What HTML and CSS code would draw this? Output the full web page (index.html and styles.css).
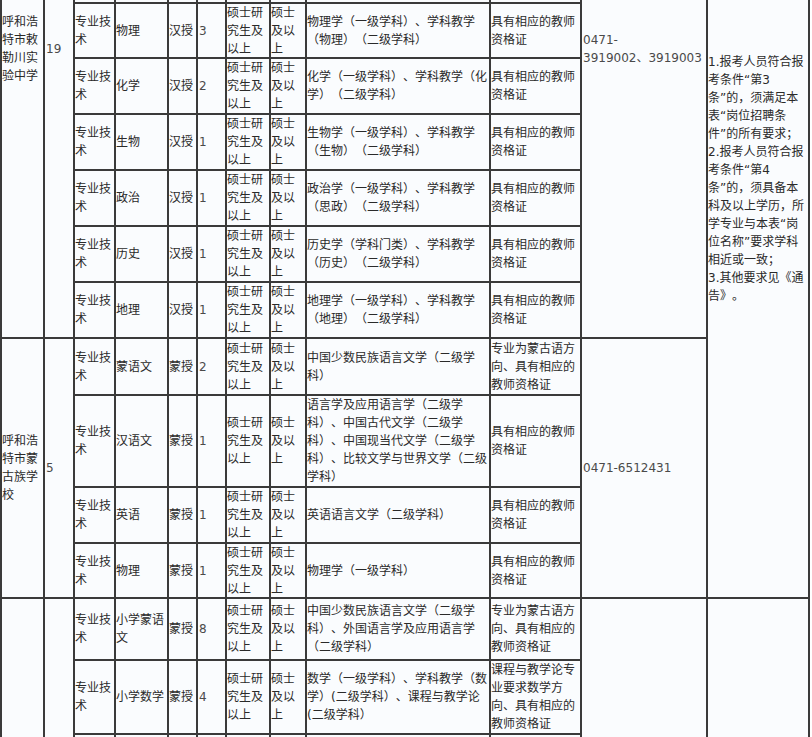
FILE: index.html
```html
<!DOCTYPE html>
<html lang="zh-CN">
<head>
<meta charset="utf-8">
<title>岗位表</title>
<link rel="stylesheet" href="styles.css">
</head>
<body>
<div class="sheet">
  <!-- continuation of the group that starts above the visible area -->
  <div class="c span7">呼和浩特市敕勒川实验中学</div>
  <div class="c span7 num">19</div>
  <div class="c"></div><div class="c"></div><div class="c"></div><div class="c"></div>
  <div class="c"></div><div class="c"></div><div class="c"></div><div class="c"></div>
  <div class="c span7 num nowrap">0471-<br>3919002、3919003</div>
  <div class="c span11 nowrap">1.报考人员符合报<br>考条件“第3<br>条”的，须满足本<br>表“岗位招聘条<br>件”的所有要求；<br>2.报考人员符合报<br>考条件“第4<br>条”的，须具备本<br>科及以上学历，所<br>学专业与本表“岗<br>位名称”要求学科<br>相近或一致；<br>3.其他要求见《通<br>告》。</div>

  <div class="c">专业技术</div><div class="c">物理</div><div class="c">汉授</div><div class="c num">3</div>
  <div class="c">硕士研究生及以上</div><div class="c">硕士及以上</div>
  <div class="c">物理学（一级学科）、学科教学（物理）（二级学科）</div><div class="c">具有相应的教师资格证</div>

  <div class="c">专业技术</div><div class="c">化学</div><div class="c">汉授</div><div class="c num">2</div>
  <div class="c">硕士研究生及以上</div><div class="c">硕士及以上</div>
  <div class="c">化学（一级学科）、学科教学（化学）（二级学科）</div><div class="c">具有相应的教师资格证</div>

  <div class="c">专业技术</div><div class="c">生物</div><div class="c">汉授</div><div class="c num">1</div>
  <div class="c">硕士研究生及以上</div><div class="c">硕士及以上</div>
  <div class="c">生物学（一级学科）、学科教学（生物）（二级学科）</div><div class="c">具有相应的教师资格证</div>

  <div class="c">专业技术</div><div class="c">政治</div><div class="c">汉授</div><div class="c num">1</div>
  <div class="c">硕士研究生及以上</div><div class="c">硕士及以上</div>
  <div class="c">政治学（一级学科）、学科教学（思政）（二级学科）</div><div class="c">具有相应的教师资格证</div>

  <div class="c">专业技术</div><div class="c">历史</div><div class="c">汉授</div><div class="c num">1</div>
  <div class="c">硕士研究生及以上</div><div class="c">硕士及以上</div>
  <div class="c">历史学（学科门类）、学科教学（历史）（二级学科）</div><div class="c">具有相应的教师资格证</div>

  <div class="c">专业技术</div><div class="c">地理</div><div class="c">汉授</div><div class="c num">1</div>
  <div class="c">硕士研究生及以上</div><div class="c">硕士及以上</div>
  <div class="c">地理学（一级学科）、学科教学（地理）（二级学科）</div><div class="c">具有相应的教师资格证</div>

  <!-- 呼和浩特市蒙古族学校 -->
  <div class="c span4">呼和浩特市蒙古族学校</div>
  <div class="c span4 num">5</div>
  <div class="c">专业技术</div><div class="c">蒙语文</div><div class="c">蒙授</div><div class="c num">2</div>
  <div class="c">硕士研究生及以上</div><div class="c">硕士及以上</div>
  <div class="c">中国少数民族语言文学（二级学科）</div><div class="c">专业为蒙古语方向、具有相应的教师资格证</div>
  <div class="c span4 num">0471-6512431</div>

  <div class="c">专业技术</div><div class="c">汉语文</div><div class="c">蒙授</div><div class="c num">1</div>
  <div class="c">硕士研究生及以上</div><div class="c">硕士及以上</div>
  <div class="c">语言学及应用语言学（二级学科）、中国古代文学（二级学科）、中国现当代文学（二级学科）、比较文学与世界文学（二级学科）</div><div class="c">具有相应的教师资格证</div>

  <div class="c">专业技术</div><div class="c">英语</div><div class="c">蒙授</div><div class="c num">1</div>
  <div class="c">硕士研究生及以上</div><div class="c">硕士及以上</div>
  <div class="c">英语语言文学（二级学科）</div><div class="c">具有相应的教师资格证</div>

  <div class="c">专业技术</div><div class="c">物理</div><div class="c">蒙授</div><div class="c num">1</div>
  <div class="c">硕士研究生及以上</div><div class="c">硕士及以上</div>
  <div class="c">物理学（一级学科）</div><div class="c">具有相应的教师资格证</div>

  <!-- next group, continues below the visible area -->
  <div class="c span3"></div>
  <div class="c span3"></div>
  <div class="c">专业技术</div><div class="c">小学蒙语文</div><div class="c">蒙授</div><div class="c num">8</div>
  <div class="c">硕士研究生及以上</div><div class="c">硕士及以上</div>
  <div class="c">中国少数民族语言文学（二级学科）、外国语言学及应用语言学（二级学科）</div><div class="c">专业为蒙古语方向、具有相应的教师资格证</div>
  <div class="c span3"></div>
  <div class="c span3"></div>

  <div class="c">专业技术</div><div class="c">小学数学</div><div class="c">蒙授</div><div class="c num">4</div>
  <div class="c">硕士研究生及以上</div><div class="c">硕士及以上</div>
  <div class="c">数学（一级学科）、学科教学（数学）(二级学科）、课程与教学论(二级学科）</div><div class="c">课程与教学论专业要求数学方向、具有相应的教师资格证</div>

  <div class="c"></div><div class="c"></div><div class="c"></div><div class="c"></div>
  <div class="c"></div><div class="c"></div><div class="c"></div><div class="c"></div>
</div>
</body>
</html>
```

FILE: styles.css
```css
html, body {
  margin: 0;
  padding: 0;
  background: #ffffff;
  overflow: hidden;
}

.sheet {
  display: grid;
  grid-template-columns: 43px 30px 41px 53px 29px 29px 44px 36px 184px 91px 126px 102px;
  grid-template-rows: 243px 55px 56px 56px 56px 56px 56px 57px 92px 56px 55px 62px 74px 60px;
  width: max-content;
  margin-top: -241px;
  border-left: 2px solid #3a3a3a;
  border-top: 2px solid #3a3a3a;
  font-family: "DejaVu Sans", "Noto Sans CJK SC", sans-serif;
  font-size: 12px;
  line-height: 18px;
  color: #2a2a2a;
  text-spacing-trim: space-all;
}

.c {
  box-sizing: border-box;
  display: flex;
  align-items: center;
  padding: 0;
  border-right: 2px solid #3a3a3a;
  border-bottom: 2px solid #3a3a3a;
  background: #fafcfe;
  overflow: hidden;
  word-break: normal;
}

.num {
  color: #4a4a4a;
  padding-left: 1px;
}

.nowrap {
  white-space: nowrap;
}

.span3 { grid-row: span 3; }
.span4 { grid-row: span 4; }
.span7 { grid-row: span 7; }
.span11 { grid-row: span 11; }
```
